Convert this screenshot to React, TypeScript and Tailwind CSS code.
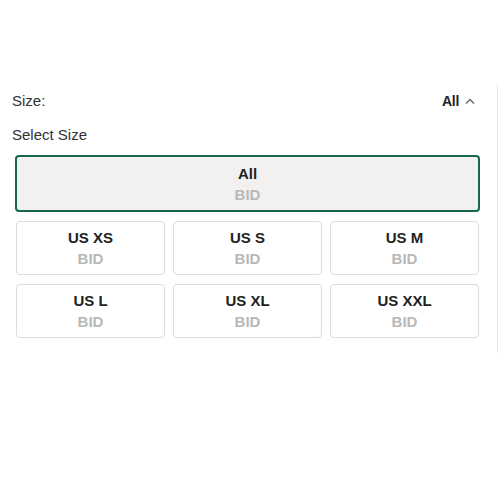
import React, { useState } from 'react';

const sizes = ['US XS', 'US S', 'US M', 'US L', 'US XL', 'US XXL'];

function SizeTile({ label, selected, onClick, wide }: { label: string; selected: boolean; onClick: () => void; wide?: boolean }) {
  return <button onClick={onClick} className={`flex flex-col items-center justify-center rounded-[4px] leading-[21px] ${wide ? 'h-[57px]' : 'h-[54px]'} ${selected ? 'border-2 border-[#17684a] bg-[#f2f1ef]' : 'border border-[#dcdcdc] bg-white'}`}>
      <span className="text-[15px] font-semibold text-[#222]">{label}</span>
      <span className="text-[15px] font-semibold text-[#b8b8b8]">BID</span>
    </button>;
}

export default function App() {
  const [selected, setSelected] = useState('All');
  return <div className="w-[500px] h-[500px] bg-white pt-[85px]" style={{ fontFamily: '"Liberation Sans", Arial, sans-serif' }}>
      <div className="w-[498px] border-r border-[#e6e6e6] pb-[15px]">
        <div className="flex items-center justify-between pl-3 pr-[22px] h-[32px]">
          <span className="text-[15px] text-[#333]">Size:</span>
          <button className="flex items-center gap-[6px]">
            <span className="text-[14px] font-bold text-[#222] tracking-[-0.3px]">{selected}</span>
            <svg width="10" height="6" viewBox="0 0 10 6" fill="none" stroke="#666" strokeWidth="1.4">
              <path d="M1 5.5l4-4 4 4" />
            </svg>
          </button>
        </div>
        <div className="pl-3 mt-[8px] h-[20px] flex items-center text-[15px] text-[#333]">Select Size</div>
        <div className="pl-[15px] pr-[17px] mt-[10px] flex flex-col gap-[9px]">
          <SizeTile label="All" wide selected={selected === 'All'} onClick={() => setSelected('All')} />
          <div className="grid grid-cols-3 gap-x-[8px] gap-y-[9px] px-[1px]">
            {sizes.map(s => <SizeTile key={s} label={s} selected={selected === s} onClick={() => setSelected(s)} />)}
          </div>
        </div>
      </div>
    </div>;
}
